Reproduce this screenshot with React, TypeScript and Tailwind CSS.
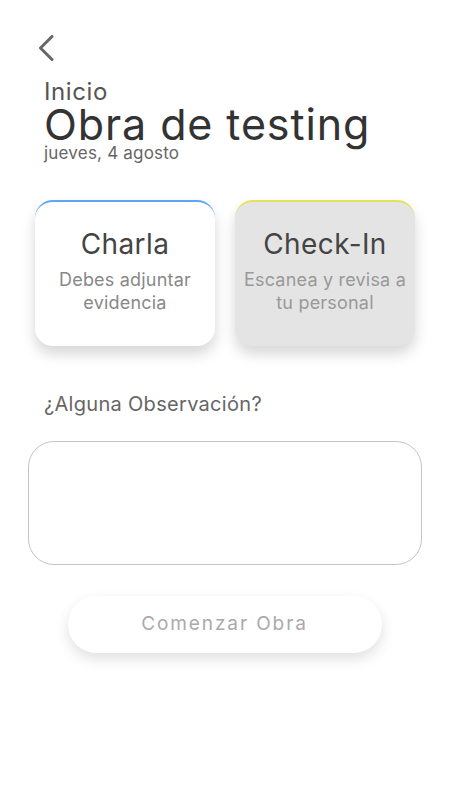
export default function App() {
  return (
    <div
      className="w-[450px] h-[800px] bg-white flex flex-col overflow-hidden"
      style={{ fontFamily: 'Inter, Roboto, "Noto Sans", sans-serif' }}
    >
      {/* back */}
      <div className="pt-[35px] pl-[38px] h-[62px]">
        <svg width="16" height="26" viewBox="0 0 16 26" fill="none">
          <polyline
            points="14,1.5 2.5,13 14,24.5"
            stroke="#666"
            strokeWidth="3"
            strokeLinecap="round"
            strokeLinejoin="round"
          />
        </svg>
      </div>

      {/* header */}
      <div className="pl-[44px] mt-[17px] flex flex-col">
        <span className="text-[24px] leading-[26px] text-[#555] tracking-[0.6px]">Inicio</span>
        <span className="text-[43px] leading-[38px] text-[#333] tracking-[0.9px]">Obra de testing</span>
        <span className="text-[17px] leading-[20px] text-[#666] tracking-[0.2px]">jueves, 4 agosto</span>
      </div>

      {/* cards */}
      <div className="flex gap-[20px] pl-[35px] mt-[37px]">
        <div className="w-[180px] h-[146px] rounded-[18px] bg-white border-t-2 border-[#5ea6f3] shadow-[0_8px_14px_rgba(0,0,0,0.16)] flex flex-col items-center pt-[25px]">
          <span className="text-[28px] leading-[34px] text-[#444] tracking-[0.4px]">Charla</span>
          <span className="mt-[7px] text-[18px] leading-[23px] text-[#888] text-center tracking-[0.2px]">
            Debes adjuntar
            <br />
            evidencia
          </span>
        </div>
        <div className="w-[180px] h-[146px] rounded-[18px] bg-[#e4e4e4] border-t-2 border-[#e3e35a] shadow-[0_8px_14px_rgba(0,0,0,0.16)] flex flex-col items-center pt-[25px]">
          <span className="text-[28px] leading-[34px] text-[#444] tracking-[0.4px]">Check-In</span>
          <span className="mt-[7px] text-[18px] leading-[23px] text-[#999] text-center tracking-[0.2px]">
            Escanea y revisa a
            <br />
            tu personal
          </span>
        </div>
      </div>

      {/* observation */}
      <div className="pl-[44px] mt-[46px] text-[20px] leading-[24px] text-[#666] tracking-[0.3px]">
        ¿Alguna Observación?
      </div>
      <div className="ml-[28px] mt-[25px] w-[394px] h-[124px] rounded-[26px] border border-[#c4c4c4]" />

      {/* button */}
      <div className="flex justify-center mt-[31px] pr-[1px]">
        <div className="w-[314px] h-[57px] rounded-full bg-white shadow-[0_6px_14px_rgba(0,0,0,0.12)] flex items-center justify-center">
          <span className="text-[19px] text-[#aaa] tracking-[1.9px]">Comenzar Obra</span>
        </div>
      </div>
    </div>
  );
}
